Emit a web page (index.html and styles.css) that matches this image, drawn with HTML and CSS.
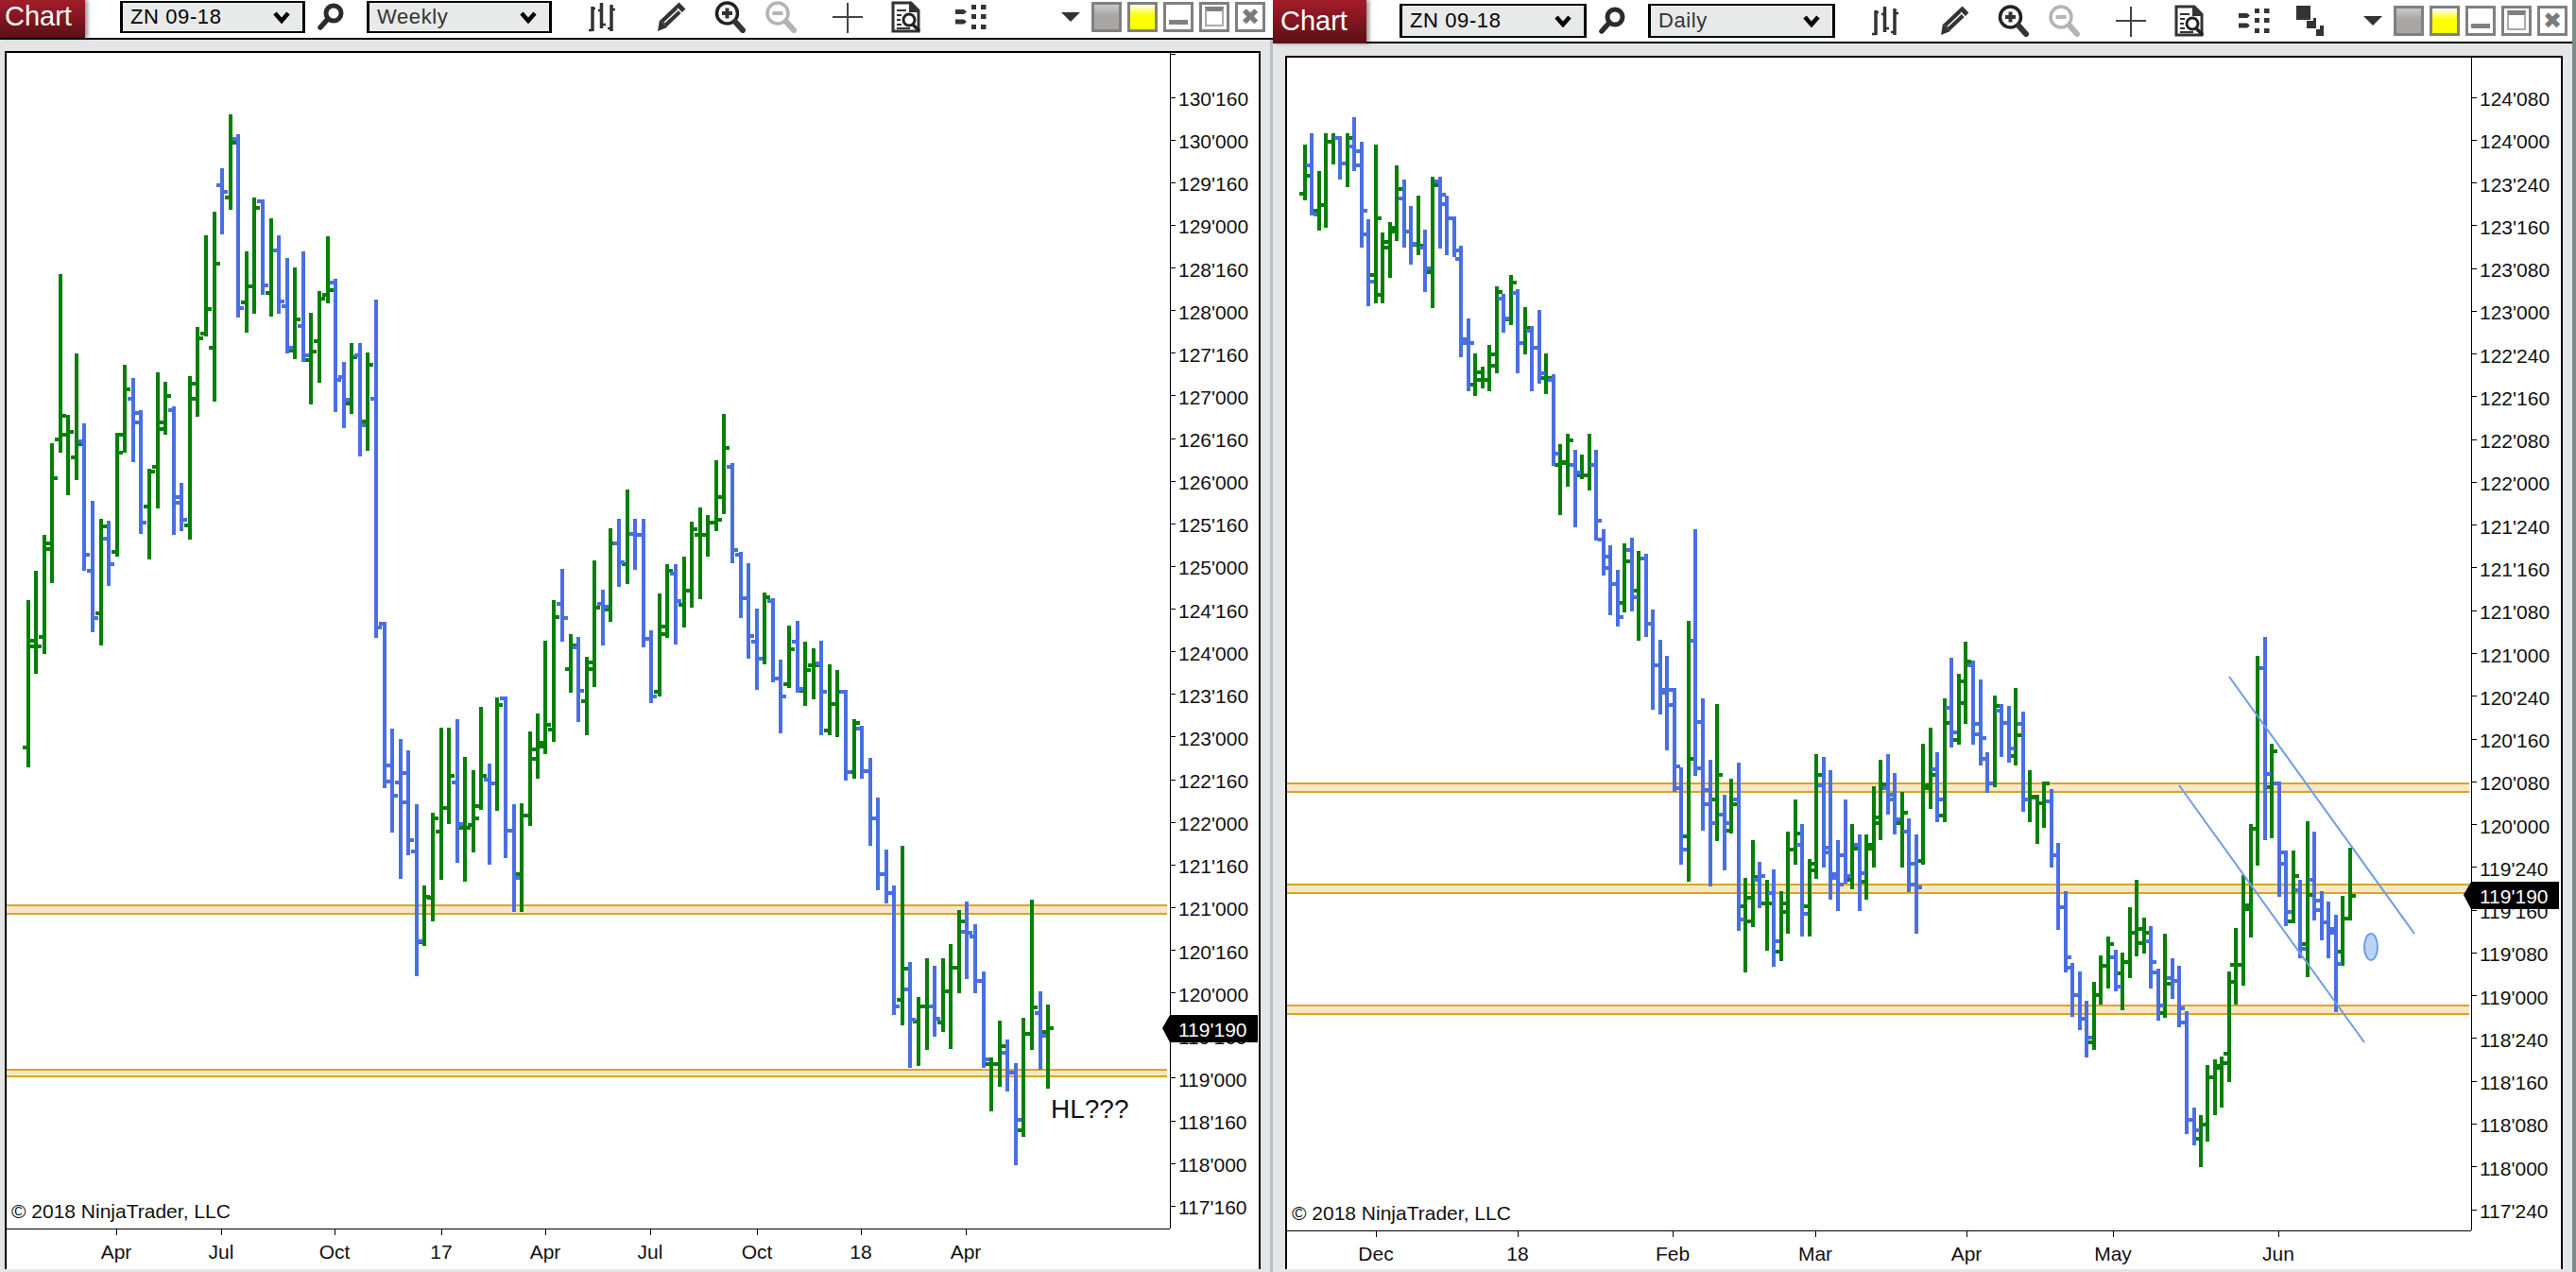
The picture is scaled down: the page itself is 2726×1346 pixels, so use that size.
FILE: index.html
```html
<!DOCTYPE html>
<html lang="en">
<head>
    <meta charset="UTF-8">
    <title>NinjaTrader Charts</title>
    <link rel="stylesheet" href="styles.css">
</head>
<body>
    <svg class="defs" width="0" height="0">
        <symbol id="i-chevron" viewBox="0 0 20 14"><path d="M3 3l7 8 7-8" fill="none" stroke="#000" stroke-width="4.5"/></symbol>
        <symbol id="i-search" viewBox="0 0 32 32"><circle cx="19" cy="12" r="8" fill="none" stroke="#2b2b2b" stroke-width="5"/><path d="M13 18L5 27" stroke="#2b2b2b" stroke-width="5.5" stroke-linecap="round"/></symbol>
        <symbol id="i-bars" viewBox="0 0 40 34"><path d="M11 6v26M20.500 2v27M31 4v28" stroke="#333" stroke-width="3.5"/><path d="M7 31h4M11 8h3M17 10h3M21 25h4M27 29h4M31 9h4" stroke="#333" stroke-width="2.500"/></symbol>
        <symbol id="i-pencil" viewBox="0 0 40 34"><path d="M10 24L30 5" stroke="#333" stroke-width="10"/><path d="M6 20l8 8-10 4z" fill="#333"/><path d="M25 8l5.500 6" stroke="#fff" stroke-width="1.500"/><path d="M11 23L26 9" stroke="#fff" stroke-width="1.500"/></symbol>
        <symbol id="i-zoomin" viewBox="0 0 40 34"><circle cx="16.500" cy="13" r="11" fill="#fff" stroke="#222" stroke-width="3.500"/><path d="M11 13h11M16.500 7.500v11" stroke="#333" stroke-width="4"/><path d="M25 22l8 9" stroke="#333" stroke-width="6" stroke-linecap="round"/></symbol>
        <symbol id="i-zoomout" viewBox="0 0 40 34"><circle cx="15" cy="13" r="11" fill="#fff" stroke="#b4b4b4" stroke-width="3.500"/><path d="M9.500 13h11" stroke="#b4b4b4" stroke-width="4"/><path d="M24 22l8 9" stroke="#b4b4b4" stroke-width="6" stroke-linecap="round"/></symbol>
        <symbol id="i-cross" viewBox="0 0 40 34"><path d="M4 17h32M20 2v32" stroke="#444" stroke-width="2"/></symbol>
        <symbol id="i-doc" viewBox="0 0 40 34"><path d="M6 2h19l8 8v22H6z" fill="#fff" stroke="#333" stroke-width="3"/><path d="M24 2v9h9" fill="#333" stroke="#333" stroke-width="2"/><path d="M10 10h10M10 15h5M10 20h4M10 25h5M10 29h14" stroke="#333" stroke-width="2"/><circle cx="23" cy="20" r="6" fill="#fff" stroke="#222" stroke-width="3"/><path d="M27 25l7 7" stroke="#222" stroke-width="3.500"/></symbol>
        <symbol id="i-layout" viewBox="0 0 40 34"><path d="M4 9h9l3 2.500-3 2.500H4zM4 19.500h9l3 2.500-3 2.500H4z" fill="#333"/><path d="M21 4h5v5h-5zM31 4h5.500v5H31zM21 14h5v5h-5zM31 14h5.500v5H31zM21 25h5v5h-5zM31 25h5.500v5H31z" fill="#333"/></symbol>
        <symbol id="i-stack" viewBox="0 0 40 34"><path d="M3 1h15v15H3zM14 17h7v-3h3v11h-10zM24 26h4v-4h4v11h-8z" fill="#333"/></symbol>
    </svg>

    <div class="window win-a">
        <div class="toolbar">
            <div class="tab">Chart</div>
            <div class="select"><span>ZN 09-18</span><svg class="chevron"><use href="#i-chevron"/></svg></div>
            <svg class="tool search"><use href="#i-search"/></svg>
            <div class="select period"><span>Weekly</span><svg class="chevron"><use href="#i-chevron"/></svg></div>
            <svg class="tool bars"><use href="#i-bars"/></svg>
            <svg class="tool pencil"><use href="#i-pencil"/></svg>
            <svg class="tool zoomin"><use href="#i-zoomin"/></svg>
            <svg class="tool zoomout"><use href="#i-zoomout"/></svg>
            <svg class="tool cross"><use href="#i-cross"/></svg>
            <svg class="tool doc"><use href="#i-doc"/></svg>
            <svg class="tool layout"><use href="#i-layout"/></svg>
            <div class="tri"></div>
            <div class="btn btn-gray"></div>
            <div class="btn btn-yellow"></div>
            <div class="btn btn-min"></div>
            <div class="btn btn-max"></div>
            <div class="btn btn-close">&#10006;</div>
        </div>
        <div class="pane"><div class="frame"><svg id="weekly" class="chart"></svg></div></div>
    </div>

    <div class="window win-b">
        <div class="toolbar">
            <div class="tab">Chart</div>
            <div class="select"><span>ZN 09-18</span><svg class="chevron"><use href="#i-chevron"/></svg></div>
            <svg class="tool search"><use href="#i-search"/></svg>
            <div class="select period"><span>Daily</span><svg class="chevron"><use href="#i-chevron"/></svg></div>
            <svg class="tool bars"><use href="#i-bars"/></svg>
            <svg class="tool pencil"><use href="#i-pencil"/></svg>
            <svg class="tool zoomin"><use href="#i-zoomin"/></svg>
            <svg class="tool zoomout"><use href="#i-zoomout"/></svg>
            <svg class="tool cross"><use href="#i-cross"/></svg>
            <svg class="tool doc"><use href="#i-doc"/></svg>
            <svg class="tool layout"><use href="#i-layout"/></svg>
            <svg class="tool stack"><use href="#i-stack"/></svg>
            <div class="tri"></div>
            <div class="btn btn-gray"></div>
            <div class="btn btn-yellow"></div>
            <div class="btn btn-min"></div>
            <div class="btn btn-max"></div>
            <div class="btn btn-close">&#10006;</div>
        </div>
        <div class="pane"><div class="frame"><svg id="daily" class="chart"></svg></div></div>
    </div>

    <script src="chart.js"></script>
</body>
</html>
```

FILE: styles.css
```css
html, body {
    margin: 0;
    height: 100%;
    overflow: hidden;
}
body {
    display: flex;
    background: #7f8c8c;
    font-family: "Liberation Sans", Arial, sans-serif;
}
.defs { position: absolute; }

.window {
    display: flex;
    flex-direction: column;
    height: 1346px;
    flex: none;
}
.win-a { width: 1347px; }
.win-b { width: 1375px; }

.toolbar {
    display: flex;
    align-items: center;
    flex: none;
    background: #fff;
    border-bottom: 2px solid #000;
}
.win-a .toolbar { height: 36px; padding: 0 8px 4px 0; }
.win-b .toolbar { height: 44px; padding: 0 5px 0 0; }

.tab {
    flex: none;
    align-self: flex-start;
    box-sizing: border-box;
    padding-left: 5px;
    color: #fff;
    font-size: 29px;
    background: linear-gradient(#a31d29, #5c0f17);
    box-shadow: 3px 0 4px rgba(0, 0, 0, .4);
    position: relative;
}
.win-a .tab { width: 90px; height: 40px; margin-right: 37px; line-height: 35px; }
.win-b .tab { width: 99px; height: 46px; margin-right: 35px; line-height: 44px; padding-left: 8px; }

.select {
    flex: none;
    box-sizing: border-box;
    display: flex;
    align-items: center;
    justify-content: space-between;
    padding: 0 12px 0 8px;
    background: #e8e9e9;
    border: solid #000;
    border-width: 2px 3px;
    font-size: 22px;
    letter-spacing: .6px;
    color: #000;
}
.win-a .select { width: 196px; height: 34px; }
.win-b .select { width: 198px; height: 36px; }
.select.period { color: #333; }
.chevron { width: 20px; height: 14px; }

.tool { flex: none; width: 40px; height: 34px; }
.search { width: 32px; height: 32px; margin: 0 22px 0 11px; }
.bars { margin-left: 32px; }
.pencil { margin-left: 36px; }
.zoomin { margin-left: 21px; }
.zoomout { margin-left: 15px; }
.cross { margin-left: 29px; }
.doc { margin-left: 22px; }
.layout { margin-left: 28px; }
.stack { margin-left: 22px; }

.tri {
    margin: 0 12px 0 auto;
    width: 0;
    height: 0;
    border: solid transparent;
    border-width: 10px 10px 0;
    border-top-color: #333;
}
.btn {
    flex: none;
    box-sizing: border-box;
    width: 32px;
    height: 32px;
    margin-left: 6px;
    border: 3px solid #808080;
    background: #fff;
}
.tri + .btn { margin-left: 0; }
.btn-gray { background: linear-gradient(#c9c9c9, #a8a5a5 45%); }
.btn-yellow { background: linear-gradient(#fff, #ffff00 45%); }
.btn-min {
    display: flex;
    align-items: flex-end;
    justify-content: center;
    padding-bottom: 5px;
}
.btn-min::after {
    content: "";
    width: 20px;
    height: 5px;
    background: #808080;
}
.btn-max { padding: 0; }
.btn-max::after {
    content: "";
    display: block;
    box-sizing: border-box;
    width: 20px;
    height: 21px;
    margin: 2px auto 0;
    border: 2px solid #aaa;
    border-top: 5px solid #808080;
}
.btn-close {
    color: #7a7a7a;
    font: bold 24px/26px "DejaVu Sans", sans-serif;
    text-align: center;
}

.pane {
    flex: 1;
    min-height: 0;
    display: flex;
    background: #e4e5e7;
}
.win-a .pane { padding: 12px 10px 3px 5px; border-right: 3px solid #bdbfc1; }
.win-b .pane { padding: 13px 10px 3px 13px; }
.frame {
    flex: 1;
    min-width: 0;
    background: #fff;
    border: 2px solid #000;
    border-bottom: 0;
}
.chart {
    display: block;
    width: 100%;
    height: 100%;
    font-family: "Liberation Sans", Arial, sans-serif;
    font-size: 21px;
    fill: #111;
}
.axis { stroke: #000; stroke-width: 1; shape-rendering: crispEdges; }
.band { fill: #f6e7c8; }
.band-line { fill: #daa520; }
.up { fill: #067f06; shape-rendering: crispEdges; }
.down { fill: #4a6fe3; shape-rendering: crispEdges; }
.trend { stroke: #6c9de6; stroke-width: 2; }
.blob { fill: #bcd3f5; stroke: #6c9de6; stroke-width: 2; }
.marker { fill: #000; }
.marker-text { fill: #fff; }
.note { font-size: 28px; }
```

FILE: chart.js
```js
var G = "up", B = "down";

// bars: [colour, x, high, low, open, close], read in the units of each block
var weeklyBlocks = [
    { ox: 0, oy: 500, sx: 2.376, sy: 2.904, bars: [
        [G,71,392,905,845,517], [G,90,302,620,533,533],
        [B,967,459,969,464,900], [B,986,787,1105,950,993], [B,1007,819,1248,952,1014],
        [B,1026,854,1175,923,1129], [B,1047,1019,1547,1164,1440], [G,1066,1269,1454,1442,1304],
        [G,1088,1045,1378,1308,1062], [G,1109,784,1253,1103,1032], [G,1128,784,1079,1032,932],
        [B,1150,758,1198,952,1080], [G,1169,874,1256,1092,1092], [G,1190,915,1166,1082,1063],
        [G,1209,720,1036,1025,932], [B,1230,894,1204,943,955], [G,1249,691,1039,955,714],
        [B,1270,688,1184,693,1100], [B,1292,1019,1349,1102,1247], [G,1311,1016,1349,1234,1053],
        [G,1332,796,1085,1053,850], [G,1352,740,940,880,843], [G,1372,517,865,830,775],
        [G,1392,392,829,790,443], [B,1413,296,519,403,447], [G,1434,497,678,604,530],
        [B,1453,505,768,537,671], [G,1475,566,806,703,585], [G,1494,270,658,604,414],
        [B,1515,360,530,403,411], [G,1534,171,458,421,218], [B,1556,142,350,218,275]
    ] },
    { ox: 0, oy: 100, sx: 2.24, sy: 2.613, bars: [
        [G,105,1218,1548,1500,1240], [G,123,965,1350,1257,1060], [G,143,497,990,953,888],
        [G,161,887,1107,940,932], [G,181,716,1065,1003,968], [B,199,909,1316,958,1272],
        [B,219,1124,1486,1316,1447], [G,239,1173,1523,1434,1193], [B,257,1179,1358,1227,1298],
        [G,277,936,1277,1265,940], [G,295,747,990,990,815], [B,315,784,1016,841,880],
        [B,333,873,1214,907,1183], [G,353,1035,1285,1139,1042], [G,374,768,1144,1029,907],
        [G,392,794,940,925,833], [B,412,862,1217,872,1112], [B,431,1074,1206,1130,1176],
        [G,450,779,1232,1191,799], [G,468,643,890,841,673], [G,488,389,668,660,593],
        [G,508,324,848,700,467], [B,526,204,388,250,268], [G,546,55,318,285,132],
        [B,564,110,616,122,590], [G,584,434,658,575,530], [G,602,285,605,530,313],
        [B,622,290,553,295,528], [G,642,342,613,548,432], [B,660,389,605,432,572],
        [B,680,452,715,585,700], [G,698,478,731,707,622], [B,718,434,740,640,720],
        [G,736,604,856,735,710], [G,757,544,796,681,565], [G,777,392,577,555,540],
        [B,795,510,877,520,790], [B,815,740,922,782,843], [G,833,687,882,854,727],
        [B,853,687,1000,720,915], [G,871,713,984,905,747], [B,891,567,1502,841,1473]
    ] },
    { ox: 640, oy: 420, sx: 3, sy: 1.912, bars: [
        [G,72,187,378,338,278], [B,96,247,349,278,280], [B,123,247,506,280,490],
        [B,147,472,619,490,607], [G,174,398,607,596,465], [G,198,338,487,480,352],
        [B,225,338,500,358,413], [G,252,323,467,421,392], [G,276,252,427,392,267],
        [G,303,224,410,279,279], [G,327,239,324,279,255], [G,354,128,272,255,203],
        [G,378,34,238,248,104], [B,405,134,337,142,310], [B,432,313,448,319,408],
        [B,456,337,529,408,484], [B,483,428,592,496,530], [G,507,396,542,530,405],
        [B,534,407,578,413,570], [B,558,532,680,570,607], [G,585,463,588,582,510],
        [B,612,453,599,496,590], [G,636,495,626,595,552], [G,663,509,611,543,543],
        [B,687,493,685,540,597], [G,714,541,684,675,622], [G,738,553,689,622,597],
        [B,765,593,777,597,760], [G,792,652,772,760,660], [B,816,665,772,672,757],
        [B,843,730,909,757,853], [B,867,811,999,853,965], [B,894,916,1024,965,1004],
        [B,918,989,1250,1004,1233], [G,945,908,1271,1220,1156], [B,969,1143,1357,1198,1260],
        [G,996,1214,1353,1264,1233], [G,1023,1136,1322,1233,1233], [B,1047,1151,1295,1233,1258],
        [G,1074,1136,1284,1266,1203], [G,1098,1107,1320,1203,1155], [G,1125,1038,1206,1155,1062],
        [B,1149,1021,1177,1083,1085], [B,1176,1067,1206,1092,1181], [B,1203,1163,1357,1181,1340],
        [G,1227,1337,1445,1350,1350], [G,1254,1262,1395,1350,1313], [B,1278,1300,1406,1326,1368],
        [B,1305,1348,1554,1368,1462], [G,1329,1256,1498,1483,1289], [G,1356,1017,1322,1289,1235],
        [B,1383,1203,1362,1246,1293], [G,1407,1230,1399,1285,1278]
    ] }
];

var dailyBlocks = [
    { ox: 1370, oy: 110, sx: 3, sy: 1.742, bars: [
        [G,33,75,178,166,132], [B,54,54,205,113,203], [G,78,124,234,196,187],
        [G,99,54,229,187,70], [G,123,54,111,70,63], [B,144,60,140,63,110],
        [G,168,54,154,110,62], [B,189,24,124,78,87], [B,213,70,264,113,196],
        [B,234,213,372,240,328], [G,258,75,367,315,210], [G,279,237,367,352,255],
        [G,303,218,321,264,228], [G,324,113,253,235,156], [B,348,139,264,174,235],
        [B,369,188,297,235,257], [G,393,169,278,260,262], [B,414,232,347,264,303],
        [G,438,134,377,310,150], [B,462,134,267,143,167], [B,483,169,278,185,210],
        [B,507,207,283,210,270], [B,528,261,466,285,433], [B,552,395,529,440,440],
        [G,573,460,539,517,495], [G,597,484,525,508,508], [G,618,444,529,508,462],
        [G,642,336,496,482,347], [B,663,350,421,358,395], [G,687,315,407,397,329],
        [B,708,341,496,348,440], [G,732,375,461,440,412], [B,753,409,529,418,450],
        [B,777,380,515,450,497], [G,798,460,534,506,506], [B,822,498,668,508,645],
        [G,843,627,757,665,662], [G,867,608,706,660,620], [B,891,638,781,665,680],
        [G,912,646,692,684,684], [G,936,608,712,684,665], [B,957,638,805,665,768],
        [B,981,784,870,803,835], [B,1002,814,943,855,885], [B,1026,859,964,885,946],
        [G,1047,810,938,920,843], [B,1071,800,935,822,910], [G,1092,824,989,897,838],
        [B,1116,829,983,838,958], [B,1137,932,1116,958,1034], [B,1161,988,1126,1034,1085],
        [B,1182,1017,1191,1080,1108], [B,1206,1077,1269,1080,1222], [B,1227,1223,1403,1262,1375],
        [G,1251,953,1433,1350,1207], [B,1272,784,1239,990,1139], [B,1296,1096,1339,1225,1265],
        [B,1320,1209,1442,1290,1325], [G,1341,1106,1358,1282,1236], [B,1365,1274,1412,1310,1325],
        [G,1386,1244,1344,1340,1290], [B,1410,1214,1525,1282,1503]
    ] },
    { ox: 1760, oy: 660, sx: 3, sy: 2.658, bars: [
        [G,261,715,980,795,770], [G,285,609,852,838,712], [B,306,670,799,720,710],
        [G,330,720,919,786,786], [B,351,691,964,757,892], [G,375,752,950,922,787],
        [G,396,585,873,810,635], [G,420,494,679,635,590], [B,441,563,881,622,815],
        [G,465,662,881,795,675], [G,486,367,717,695,425], [B,510,375,685,455,630],
        [B,531,412,775,643,705], [B,555,609,807,715,650], [B,579,494,730,733,710],
        [G,600,563,746,720,633], [B,624,593,807,622,703], [G,645,593,775,726,622],
        [G,669,457,685,633,545], [G,690,383,610,560,452], [B,714,367,536,462,480],
        [B,735,420,594,495,550], [G,759,473,685,560,531], [B,780,547,754,584,675],
        [B,804,593,873,733,741], [G,825,338,679,666,455], [G,849,292,520,462,425],
        [B,870,361,557,409,494], [G,894,210,557,539,280], [B,915,96,347,236,305],
        [G,939,141,339,326,162], [G,960,50,281,224,107], [B,984,104,339,116,282],
        [B,1008,157,400,312,322], [B,1029,361,475,380,450], [G,1053,202,459,449,232],
        [B,1074,226,376,244,279], [B,1098,231,392,279,350], [G,1119,181,400,372,313],
        [B,1143,247,528,282,494], [G,1164,412,557,494,487], [G,1188,482,618,490,506],
        [G,1209,445,573,506,449], [B,1233,465,685,499,651], [B,1254,617,860,651,797],
        [B,1278,752,980,797,938], [B,1299,954,1107,967,1045], [B,1323,978,1144,1045,1110],
        [B,1344,1060,1219,1110,1165], [G,1368,1007,1198,1177,1045], [G,1389,933,1070,1045,961],
        [G,1413,880,1025,961,900]
    ] },
    { ox: 2200, oy: 650, sx: 2.98, sy: 3, bars: [
        [B,116,1065,1196,1088,1183], [G,137,1075,1256,1140,1103], [G,161,930,1154,1103,1010],
        [G,182,843,1085,1010,1000], [G,206,963,1076,1045,1010], [B,227,990,1187,1037,1104],
        [B,250,1125,1289,1137,1243], [G,271,1014,1280,1265,1172], [B,295,1092,1220,1155,1165],
        [B,316,1116,1312,1165,1250], [G,495,997,1238,1112,1112], [G,519,828,1178,1112,925],
        [G,543,667,1025,935,680], [G,563,132,797,680,170], [B,587,72,718,170,508],
        [G,608,412,710,550,435], [B,632,532,898,537,792], [B,653,750,990,755,945],
        [G,677,750,982,975,832], [B,698,843,1093,875,1062], [G,721,657,1153,1048,892],
        [B,742,690,973,843,940], [B,766,880,1034,910,978], [B,787,912,1093,978,1010],
        [B,811,955,1262,1000,1110], [G,832,894,1117,1070,965], [G,856,741,973,965,893]
    ] },
    { ox: 0, oy: 0, sx: 1, sy: 1, bars: [
        [B,2314,1070,1200,1082,1185], [B,2322,1172,1212,1185,1196], [G,2329,1180,1235,1205,1190],
        [G,2336,1127,1208,1190,1140], [G,2344,1121,1180,1140,1128], [G,2351,1118,1172,1130,1125],
        [G,2359,1028,1145,1115,1039]
    ] }
];

var NS = "http://www.w3.org/2000/svg";

function add(svg, tag, attrs, text) {
    var el = document.createElementNS(NS, tag);
    for (var k in attrs) el.setAttribute(k, attrs[k]);
    if (text) el.textContent = text;
    svg.appendChild(el);
    return el;
}

function drawBars(svg, blocks) {
    var paths = { up: "", down: "" };
    blocks.forEach(function(b) {
        b.bars.forEach(function(r) {
            var x = Math.round(b.ox + r[1] / b.sx);
            var high = Math.round(b.oy + r[2] / b.sy);
            var low = Math.round(b.oy + r[3] / b.sy);
            var open = Math.round(b.oy + r[4] / b.sy);
            var close = Math.round(b.oy + r[5] / b.sy);
            paths[r[0]] += "M" + (x - 2) + " " + high + "h4V" + low + "h-4z"
                + "M" + (x - 6) + " " + (open - 2) + "h4v4h-4z"
                + "M" + (x + 2) + " " + (close - 2) + "h4v4h-4z";
        });
    });
    add(svg, "path", { "class": "up", d: paths.up });
    add(svg, "path", { "class": "down", d: paths.down });
}

function drawChart(cfg) {
    var svg = document.getElementById(cfg.id);
    svg.setAttribute("viewBox", cfg.left + " " + cfg.top + " " + cfg.width + " " + cfg.height);

    cfg.bands.forEach(function(b) {
        add(svg, "rect", { "class": "band", x: cfg.left, y: b[0], width: cfg.bandEnd - cfg.left, height: b[1] - b[0] });
        add(svg, "rect", { "class": "band-line", x: cfg.left, y: b[0], width: cfg.bandEnd - cfg.left, height: 2 });
        add(svg, "rect", { "class": "band-line", x: cfg.left, y: b[1] - 2, width: cfg.bandEnd - cfg.left, height: 2 });
    });

    drawBars(svg, cfg.blocks);
    if (cfg.extra) cfg.extra(svg);

    add(svg, "line", { "class": "axis", x1: cfg.axisX + .5, y1: cfg.top, x2: cfg.axisX + .5, y2: cfg.axisY });
    add(svg, "line", { "class": "axis", x1: cfg.left, y1: cfg.axisY + .5, x2: cfg.axisX, y2: cfg.axisY + .5 });

    // price scale
    cfg.prices.forEach(function(label, i) {
        var y = cfg.firstTick + cfg.pitch * i;
        add(svg, "line", { "class": "axis", x1: cfg.axisX, y1: y, x2: cfg.axisX + 6, y2: y });
        add(svg, "text", { x: cfg.axisX + 9, y: y + 9 }, label);
    });
    add(svg, "line", { "class": "axis", x1: cfg.axisX, y1: cfg.firstTick - cfg.pitch, x2: cfg.axisX + 6, y2: cfg.firstTick - cfg.pitch });

    // time scale
    cfg.times.forEach(function(t) {
        add(svg, "line", { "class": "axis", x1: t[0], y1: cfg.axisY, x2: t[0], y2: cfg.axisY + 7 });
        add(svg, "text", { x: t[0], y: cfg.axisY + 32, "text-anchor": "middle" }, t[1]);
    });

    // last price marker
    var my = cfg.lastY, ax = cfg.axisX, mr = cfg.markerEnd;
    add(svg, "polygon", { "class": "marker", points: (ax - 8) + "," + my + " " + ax + "," + (my - 14) + " " + mr + "," + (my - 14) + " " + mr + "," + (my + 15) + " " + ax + "," + (my + 15) });
    add(svg, "text", { "class": "marker-text", x: ax + 9, y: my + 9 }, "119'190");

    add(svg, "text", { x: cfg.left + 5, y: cfg.axisY - 11 }, "\u00a9 2018 NinjaTrader, LLC");
}

function priceLabels(whole, part, step, count) {
    var out = [];
    for (var i = 0; i < count; i++) {
        out.push(whole + "'" + ("00" + part).slice(-3));
        part -= step;
        if (part < 0) { part += 320; whole--; }
    }
    return out;
}

drawChart({
    id: "weekly", left: 7, top: 56, width: 1325, height: 1287,
    axisX: 1238, axisY: 1300, bandEnd: 1235, markerEnd: 1331, lastY: 1088,
    firstTick: 103, pitch: 45.13,
    bands: [[957, 968], [1131, 1140]],
    blocks: weeklyBlocks,
    prices: priceLabels(130, 160, 160, 27),
    times: [[123, "Apr"], [234, "Jul"], [354, "Oct"], [467, "17"], [577, "Apr"], [688, "Jul"], [801, "Oct"], [911, "18"], [1022, "Apr"]],
    extra: function(svg) {
        add(svg, "text", { "class": "note", x: 1112, y: 1183 }, "HL???");
    }
});

drawChart({
    id: "daily", left: 1362, top: 61, width: 1348, height: 1282,
    axisX: 2615, axisY: 1302, bandEnd: 2613, markerEnd: 2708, lastY: 947,
    firstTick: 103, pitch: 45.27,
    bands: [[828, 839], [935, 946], [1063, 1074]],
    blocks: dailyBlocks,
    prices: priceLabels(124, 80, 80, 27),
    times: [[1456, "Dec"], [1606, "18"], [1770, "Feb"], [1921, "Mar"], [2081, "Apr"], [2236, "May"], [2411, "Jun"]],
    extra: function(svg) {
        add(svg, "line", { "class": "trend", x1: 2359, y1: 716, x2: 2555, y2: 988 });
        add(svg, "line", { "class": "trend", x1: 2306, y1: 831, x2: 2502, y2: 1103 });
        add(svg, "ellipse", { "class": "blob", cx: 2509, cy: 1002, rx: 7, ry: 14 });
    }
});
```
